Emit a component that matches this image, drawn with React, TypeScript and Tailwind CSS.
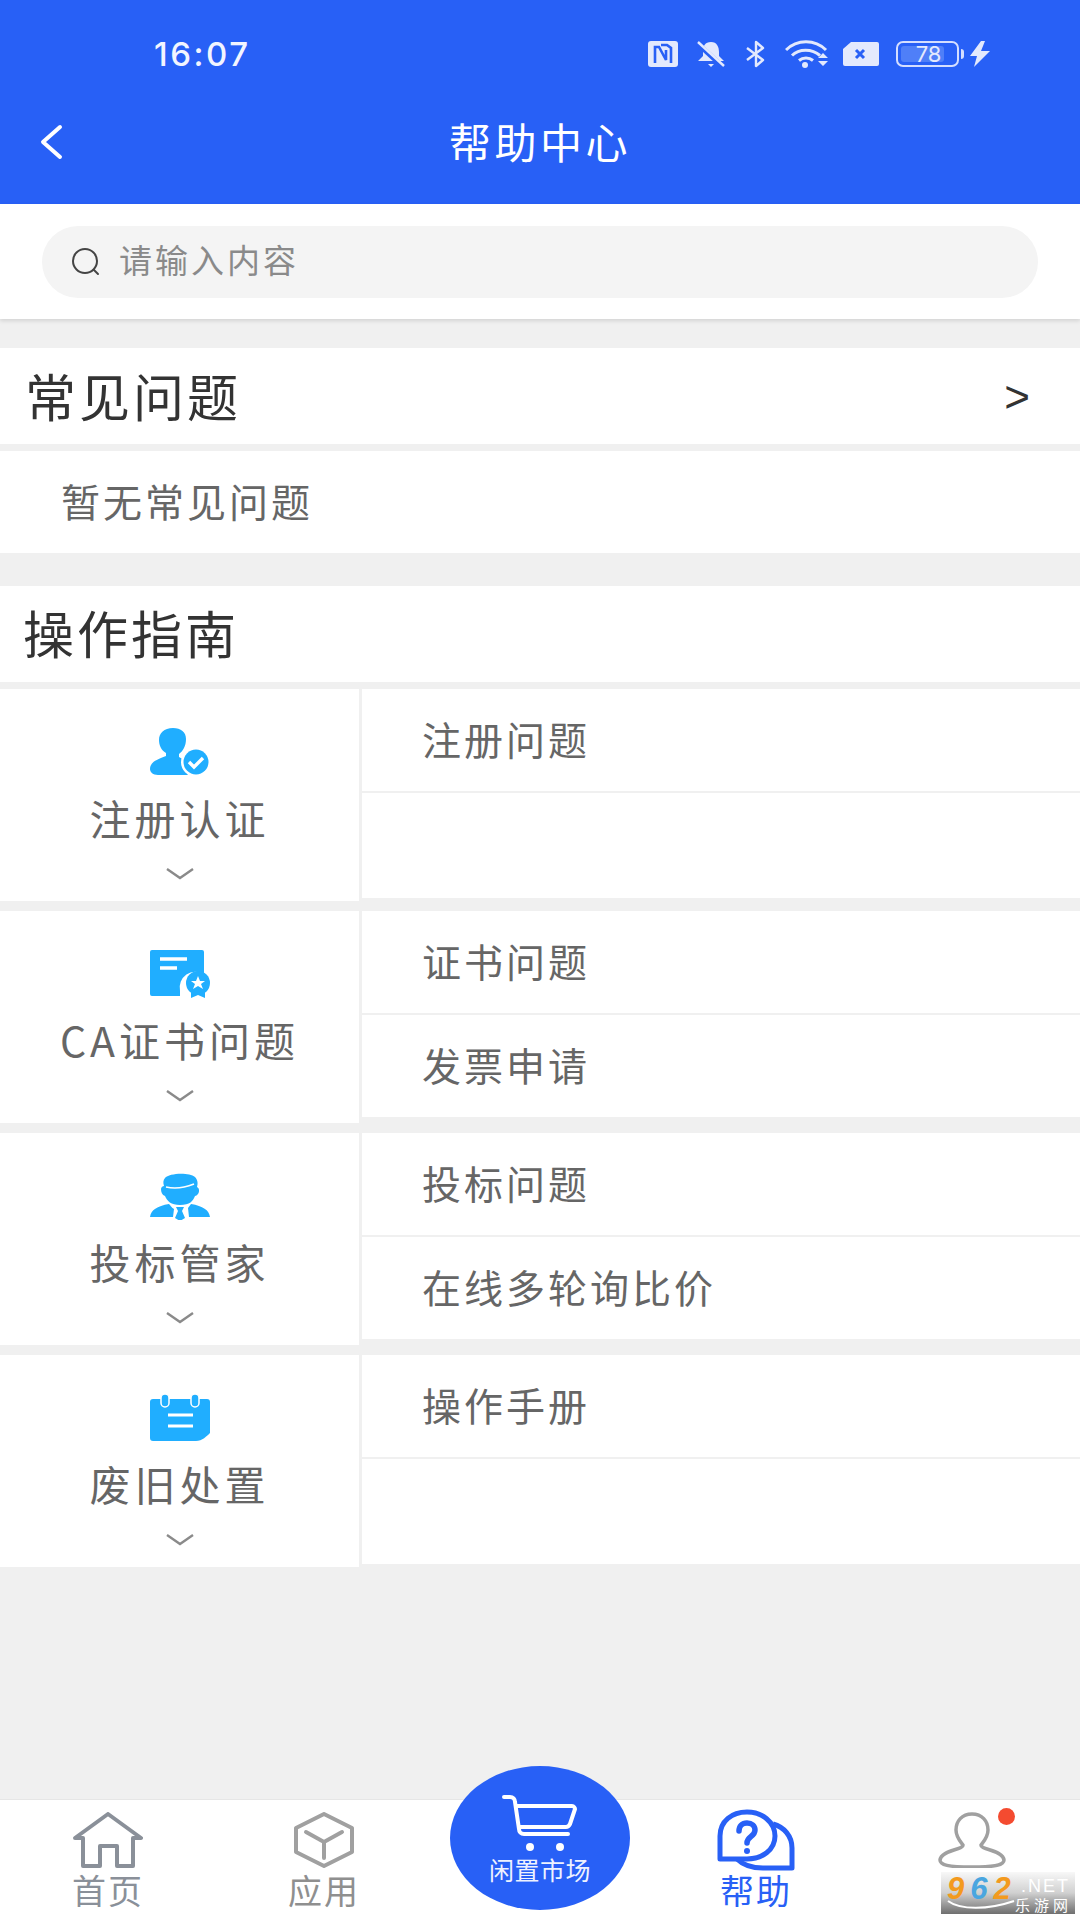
import React from "react";

const FONT = "font-['Noto_Sans_CJK_SC','Noto_Sans',sans-serif]";

function StatusIcons() {
  const c = "#e3e9fd";
  return (
    <div className="ml-auto mr-[90px] flex items-center">
      <svg width="30" height="26" viewBox="0 0 30 26">
        <rect x="0" y="0" width="30" height="26" rx="3" fill={c} />
        <path d="M7 22V6h4l7 13V9M13 4h6l4 3v15" fill="none" stroke="#2860f6" strokeWidth="2.600" />
      </svg>
      <svg className="ml-[18px]" width="30" height="28" viewBox="0 0 30 28">
        <path d="M15 2c6 0 8 5 8 10v4l5 5H2l5-5v-5c0-5 2-9 8-9z" fill={c} />
        <path d="M12 24h6l-3 3z" fill={c} />
        <path d="M1 3l26 24" stroke="#2860f6" strokeWidth="5" />
        <path d="M2 2l26 24" stroke={c} strokeWidth="2.400" />
      </svg>
      <svg className="ml-[19px]" width="21" height="28" viewBox="0 0 21 28" fill="none">
        <path d="M2 8l16 12-7 6V2l7 6L2 20" stroke={c} strokeWidth="2.400" strokeLinejoin="round" />
      </svg>
      <svg className="ml-[19px]" width="45" height="28" viewBox="0 0 45 28" fill="none">
        <path d="M1 10c11-11 29-11 40 0" stroke={c} strokeWidth="3" />
        <path d="M7 15.500c7-7 20-7 28 0" stroke={c} strokeWidth="3" />
        <path d="M14 20.500c4-3.500 10-3.500 14 0" stroke={c} strokeWidth="3" />
        <circle cx="20" cy="25" r="3" fill={c} />
        <path d="M33 18l5-5 5 5zM33 21l5 5 5-5z" fill={c} />
      </svg>
      <svg className="ml-[13px]" width="36" height="24" viewBox="0 0 36 24">
        <path d="M8 0h26a2 2 0 0 1 2 2v20a2 2 0 0 1-2 2H2a2 2 0 0 1-2-2V7z" fill={c} />
        <path d="M13 8l8 8M21 8l-8 8" stroke="#2860f6" strokeWidth="3" />
      </svg>
      <div className="relative ml-[17px] flex h-[26px] w-[63px] items-center rounded-[7px] border-2 border-[#d4deff] p-[3px]">
        <div className="h-full w-[43px] rounded-[3px] bg-[#4f7ff8]" />
        <span className="absolute inset-0 flex items-center justify-center pl-[2px] font-['Inter',sans-serif] text-[22px] leading-none text-[#e3e9fd]">78</span>
        <div className="absolute right-[-7px] top-[6px] h-[10px] w-[3px] rounded-r bg-[#d4deff]" />
      </div>
      <svg className="ml-[11px]" width="20" height="26" viewBox="0 0 20 26">
        <path d="M11 0L0 15h7l-3 11 16-16h-9l4-10z" fill={c} />
      </svg>
    </div>
  );
}

function Chevron() {
  return (
    <svg width="30" height="14" viewBox="0 0 30 14" fill="none">
      <path d="M2 2l13 9 13-9" stroke="#8a8a8a" strokeWidth="2.400" />
    </svg>
  );
}

const UserIcon = () => (
  <svg width="60" height="48" viewBox="0 0 60 48">
    <path d="M23 0c8 0 13 4 13 11 0 7-3 12-7 15v3c3 2 6 3 9 5-2 4-2 9 0 13H8c-5 0-8-3-8-6 0-6 5-9 16-13v-3c-5-3-7-8-7-13C9 5 14 0 23 0z" fill="#20aeff" />
    <circle cx="46" cy="34" r="15" fill="#fff" />
    <circle cx="46" cy="34" r="12.500" fill="#20aeff" />
    <path d="M39 34l5 5 9-9" fill="none" stroke="#fff" strokeWidth="3.400" />
  </svg>
);
const CertIcon = () => (
  <svg width="60" height="48" viewBox="0 0 60 48">
    <path d="M2 0h50a2 2 0 0 1 2 2v22a16 16 0 0 0-24 17v5H2a2 2 0 0 1-2-2V2a2 2 0 0 1 2-2z" fill="#20aeff" />
    <path d="M10 9h27M10 18h17" stroke="#fff" strokeWidth="3.600" />
    <circle cx="48" cy="33" r="12" fill="#20aeff" />
    <path d="M48 26l2 5h5l-4 3 2 5-5-3-5 3 2-5-4-3h5z" fill="#fff" />
    <path d="M41 42v6l7-3 7 3v-6z" fill="#20aeff" />
  </svg>
);
const AgentIcon = () => (
  <svg width="60" height="48" viewBox="0 0 60 48">
    <path d="M15 6c4-5 24-6 30-1 3 3 3 7 2 10 2 1 3 4 1 7-1 1-2 2-3 2-2 5-5 9-15 9-9 0-13-4-15-9-3-1-4-4-4-7 0-2 2-3 3-3-1-3-1-6 1-8z" fill="#20aeff" />
    <path d="M16 15c8 2 18 1 28-3" fill="none" stroke="#fff" strokeWidth="1.600" />
    <path d="M0 45c1-7 7-11 19-13 2 2 2 3 5 5l-1 8zM60 45c-1-7-7-11-19-13l-3 4 1 9z" fill="#20aeff" />
    <path d="M26 35h8l-2 4 3 7-5 3-5-3 3-7z" fill="#20aeff" />
  </svg>
);
const CalIcon = () => (
  <svg width="60" height="48" viewBox="0 0 60 48">
    <path d="M3 5h54a3 3 0 0 1 3 3v31c-3 3-8 8-14 8H3a3 3 0 0 1-3-3V8a3 3 0 0 1 3-3z" fill="#20aeff" />
    <rect x="11" y="0" width="8" height="13" rx="4" fill="#20aeff" stroke="#fff" strokeWidth="1.500" />
    <rect x="41" y="0" width="8" height="13" rx="4" fill="#20aeff" stroke="#fff" strokeWidth="1.500" />
    <path d="M18 21h25M18 32h25" stroke="#fff" strokeWidth="3" />
  </svg>
);

type Group = { icon: React.ReactNode; label: string; rows: [string, string] };
const groups: Group[] = [
  { icon: <UserIcon />, label: "注册认证", rows: ["注册问题", ""] },
  { icon: <CertIcon />, label: "CA证书问题", rows: ["证书问题", "发票申请"] },
  { icon: <AgentIcon />, label: "投标管家", rows: ["投标问题", "在线多轮询比价"] },
  { icon: <CalIcon />, label: "废旧处置", rows: ["操作手册", ""] },
];

function NavItem({ icon, label, color }: { icon: React.ReactNode; label: string; color: string }) {
  return (
    <div className="flex flex-col items-center pt-[8px]">
      <div className="flex h-[64px] items-center justify-center">{icon}</div>
      <span className={`text-[34px] leading-[36px] tracking-[2px] ${color}`}>{label}</span>
    </div>
  );
}

export default function App() {
  return (
    <div className={`relative flex h-[1920px] w-[1080px] flex-col overflow-hidden bg-[#f0f0f0] ${FONT}`}>
      <header className="h-[204px] bg-[#2860f6] text-white">
        <div className="flex h-[108px] items-center pl-[154px]">
          <span className="pt-[2px] font-['Inter',sans-serif] text-[33px] font-medium tracking-[2.500px] text-[#f2f5ff]">16:07</span>
          <StatusIcons />
        </div>
        <div className="relative -mt-[2px] flex h-[70px] items-center justify-center">
          <svg className="absolute left-[38px] top-[18px]" width="26" height="36" viewBox="0 0 26 36" fill="none">
            <path d="M22 3L5 18l17 15" stroke="#fff" strokeWidth="4" strokeLinecap="round" strokeLinejoin="round" />
          </svg>
          <span className="text-[42px] leading-none tracking-[3.500px]">帮助中心</span>
        </div>
      </header>

      <div className="z-10 flex h-[115px] items-start bg-white px-[42px] pt-[22px] shadow-[0_2px_4px_rgba(0,0,0,0.12)]">
        <div className="flex h-[72px] flex-1 items-center rounded-full bg-[#f4f4f4] pl-[28px]">
          <svg width="32" height="32" viewBox="0 0 32 32" fill="none">
            <circle cx="15" cy="15" r="12" stroke="#444" strokeWidth="2" />
            <path d="M24 24l4 4" stroke="#444" strokeWidth="2" strokeLinecap="round" />
          </svg>
          <span className="mb-[4px] ml-[17px] text-[33px] tracking-[3px] text-[#8a8a8a]">请输入内容</span>
        </div>
      </div>

      <section className="mt-[29px] flex h-[96px] items-center justify-between bg-white pl-[25px] pr-[50px]">
        <span className="mb-[2px] text-[51px] tracking-[3px] text-[#333]">常见问题</span>
        <span className="mt-[2px] font-['Liberation_Sans',sans-serif] text-[44px] text-[#333]">&gt;</span>
      </section>
      <div className="mt-[7px] flex h-[102px] items-center bg-white pl-[61px]">
        <span className="mb-[3px] text-[39px] tracking-[3px] text-[#666]">暂无常见问题</span>
      </div>

      <section className="mt-[33px] flex h-[96px] items-center bg-white pl-[23px]">
        <span className="mb-[3px] text-[51px] tracking-[3px] text-[#333]">操作指南</span>
      </section>

      <div className="mt-[7px] flex flex-col gap-[10px]">
        {groups.map((g) => (
          <div key={g.label} className="flex h-[212px]">
            <div className="flex w-[359px] flex-col items-center bg-white pt-[37px]">
              <div className="flex h-[52px] w-[60px] items-center justify-center">{g.icon}</div>
              <span className="mt-[11px] text-[41px] leading-[56px] tracking-[4px] text-[#666]">{g.label}</span>
              <div className="mt-[22px]">
                <Chevron />
              </div>
            </div>
            <div className="ml-[3px] flex flex-1 flex-col">
              {g.rows.map((r, i) => (
                <div
                  key={i}
                  className={`flex items-center bg-white pl-[60px] ${i === 0 ? "h-[102px]" : r ? "mt-[2px] h-[102px]" : "mt-[2px] h-[105px]"}`}
                >
                  {r && <span className="mb-[3px] text-[39px] tracking-[3px] text-[#666]">{r}</span>}
                </div>
              ))}
            </div>
          </div>
        ))}
      </div>

      <nav className="absolute bottom-0 left-0 grid h-[121px] w-full grid-cols-5 border-t border-t-[#e6e6e6] bg-white">
        <NavItem
          color="text-[#8a9099]"
          label="首页"
          icon={
            <svg width="70" height="56" viewBox="0 0 70 56" fill="none">
              <path d="M2 26L35 2l33 24H60v28H44V34H27v20H10V26z" stroke="#8a9099" strokeWidth="4" strokeLinejoin="round" />
            </svg>
          }
        />
        <NavItem
          color="text-[#8f8f8f]"
          label="应用"
          icon={
            <svg width="60" height="56" viewBox="0 0 60 56" fill="none" stroke="#a0a0a0" strokeWidth="4">
              <path d="M30 2l28 14v24L30 54 2 40V16z" strokeLinejoin="round" />
              <path d="M12 20l18 10 18-10M30 30v16" strokeLinecap="round" />
            </svg>
          }
        />
        <div />
        <NavItem
          color="text-[#2860f6]"
          label="帮助"
          icon={
            <svg width="78" height="62" viewBox="0 0 78 62" fill="none" stroke="#2860f6" strokeWidth="5">
              <path d="M3 50V27C3 12 15 3 30 3s28 10 28 24-13 23-28 23z" strokeLinejoin="round" />
              <path d="M56 15c11 3 19 12 19 24v20H46c-12 0-20-3-26-9" strokeLinejoin="round" />
              <path d="M22 22c0-5 3-8 8-8s8 3 8 7c0 7-8 6-8 13" strokeLinecap="round" strokeWidth="5.500" />
              <circle cx="30" cy="42" r="3" fill="#2860f6" stroke="none" />
            </svg>
          }
        />
        <div className="flex flex-col items-center pt-[8px]">
          <div className="flex h-[64px] items-center justify-center">
            <svg width="68" height="56" viewBox="0 0 68 56" fill="none">
              <path d="M34 2c10 0 16 7 16 16 0 7-4 11-7 15 0 5 22 5 23 15 0 5-8 7-32 7S2 53 2 48c1-10 23-10 23-15-3-4-7-8-7-15C18 9 24 2 34 2z" stroke="#a0a0a0" strokeWidth="3.500" />
            </svg>
          </div>
          <span className="text-[30px] leading-[36px] text-[#8f8f8f]">我的</span>
        </div>
      </nav>

      <div className="absolute bottom-[10px] left-[450px] flex h-[144px] w-[180px] flex-col items-center rounded-[50%] bg-[#2860f6] pt-[28px]">
        <svg width="76" height="60" viewBox="0 0 76 60" fill="none" stroke="#fff" strokeWidth="4" strokeLinecap="round" strokeLinejoin="round">
          <path d="M2 3h6c3 0 5 2 5 5l4 27c0 3 2 5 5 5h44" />
          <path d="M14 12h56c2 0 3 2 3 3l-5 15c-1 2-2 3-4 3H18" />
          <circle cx="28" cy="53" r="4" fill="#fff" stroke="none" />
          <circle cx="58" cy="53" r="4" fill="#fff" stroke="none" />
        </svg>
        <span className="mt-[1px] text-[25px] leading-[28px] tracking-[0.5px] text-[#eef2ff]">闲置市场</span>
      </div>

      <div className="absolute left-[998px] top-[1808px] h-[17px] w-[17px] rounded-full bg-[#f44b30]" />

      <div className="absolute left-[941px] top-[1872px] h-[42px] w-[134px] bg-gradient-to-b from-[#f8f8f8] via-[#d0d0d0] to-[#6f6f6f]">
        <span className="absolute left-[6px] top-[1px] font-['Liberation_Sans',sans-serif] text-[31px] font-bold italic leading-none tracking-[6px] text-[#f39a1e]">9<span className="text-[#4aa6e0]">6</span>2</span>
        <span className="absolute left-[80px] top-[5px] font-['Liberation_Sans',sans-serif] text-[18px] leading-none tracking-[2px] text-white">.NET</span>
        <span className="absolute right-[3px] top-[25px] text-[15px] leading-none tracking-[4px] text-white">乐游网</span>
        <svg className="absolute left-[6px] top-[27px]" width="70" height="14" viewBox="0 0 70 14" fill="none">
          <path d="M1 2c12 9 40 9 66 0" stroke="#fff" strokeWidth="2" />
        </svg>
      </div>
    </div>
  );
}
